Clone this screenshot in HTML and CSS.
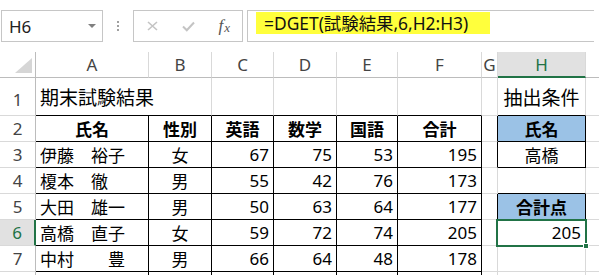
FILE: index.html
```html
<!DOCTYPE html>
<html lang="ja">
  <head>
    <meta charset="UTF-8" />
    <title>DGET</title>
    <link rel="stylesheet" href="styles.css">
  </head>
  <body>
    <div class="topbar">
      <div class="namebox"><span>H6</span><span class="caret"></span></div>
      <div class="dots"><span></span><span></span><span></span></div>
      <div class="fxbox">
        <span class="btn">
          <svg width="11" height="10" viewBox="0 0 11 10"><path d="M1 1 L10 9 M10 1 L1 9" stroke="#c4c4c4" stroke-width="1.6" fill="none"/></svg>
        </span>
        <span class="btn">
          <svg width="13" height="11" viewBox="0 0 13 11"><path d="M1 5.5 L4.8 9.3 L12 1.5" stroke="#c4c4c4" stroke-width="2" fill="none"/></svg>
        </span>
        <span class="btn fx"><i>f</i><i class="sub">x</i></span>
      </div>
      <div class="formula"><span class="hl">=DGET(試験結果,6,H2:H3)</span></div>
    </div>

    <div class="sheet">
      <!-- column headers -->
      <div class="c corner"><div class="tri"></div></div>
      <div class="c ch">A</div>
      <div class="c ch">B</div>
      <div class="c ch">C</div>
      <div class="c ch">D</div>
      <div class="c ch">E</div>
      <div class="c ch">F</div>
      <div class="c ch">G</div>
      <div class="c ch sel">H</div>
      <div class="c ch"></div>

      <!-- row 1 -->
      <div class="c rh r1">1</div>
      <div class="c title bb span2">期末試験結果</div>
      <div class="c bb"></div>
      <div class="c bb"></div>
      <div class="c bb"></div>
      <div class="c bb"></div>
      <div class="c"></div>
      <div class="c ctr title2 bb">抽出条件</div>
      <div class="c"></div>

      <!-- row 2 -->
      <div class="c rh">2</div>
      <div class="c ctr b br bb">氏名</div>
      <div class="c ctr b br bb">性別</div>
      <div class="c ctr b br bb">英語</div>
      <div class="c ctr b br bb">数学</div>
      <div class="c ctr b br bb">国語</div>
      <div class="c ctr b br bb">合計</div>
      <div class="c br"></div>
      <div class="c ctr b blue br bb">氏名</div>
      <div class="c"></div>

      <!-- row 3 -->
      <div class="c rh">3</div>
      <div class="c br bb">伊藤　裕子</div>
      <div class="c ctr br bb">女</div>
      <div class="c num br bb">67</div>
      <div class="c num br bb">75</div>
      <div class="c num br bb">53</div>
      <div class="c num br bb">195</div>
      <div class="c br"></div>
      <div class="c ctr br bb">高橋</div>
      <div class="c"></div>

      <!-- row 4 -->
      <div class="c rh">4</div>
      <div class="c br bb">榎本　徹</div>
      <div class="c ctr br bb">男</div>
      <div class="c num br bb">55</div>
      <div class="c num br bb">42</div>
      <div class="c num br bb">76</div>
      <div class="c num br bb">173</div>
      <div class="c"></div>
      <div class="c bb"></div>
      <div class="c"></div>

      <!-- row 5 -->
      <div class="c rh">5</div>
      <div class="c br bb">大田　雄一</div>
      <div class="c ctr br bb">男</div>
      <div class="c num br bb">50</div>
      <div class="c num br bb">63</div>
      <div class="c num br bb">64</div>
      <div class="c num br bb">177</div>
      <div class="c br"></div>
      <div class="c ctr b blue br bb">合計点</div>
      <div class="c"></div>

      <!-- row 6 -->
      <div class="c rh sel">6</div>
      <div class="c br bb">高橋　直子</div>
      <div class="c ctr br bb">女</div>
      <div class="c num br bb">59</div>
      <div class="c num br bb">72</div>
      <div class="c num br bb">74</div>
      <div class="c num br bb">205</div>
      <div class="c br"></div>
      <div class="c num br bb active">205</div>
      <div class="c"></div>

      <!-- row 7 -->
      <div class="c rh">7</div>
      <div class="c br bb">中村　　豊</div>
      <div class="c ctr br bb">男</div>
      <div class="c num br bb">66</div>
      <div class="c num br bb">64</div>
      <div class="c num br bb">48</div>
      <div class="c num br bb">178</div>
      <div class="c"></div>
      <div class="c"></div>
      <div class="c"></div>

      <!-- row 8 (only its top edge is in view) -->
      <div class="c rh"></div>
      <div class="c br bb"></div>
      <div class="c br bb"></div>
      <div class="c br bb"></div>
      <div class="c br bb"></div>
      <div class="c br bb"></div>
      <div class="c br bb"></div>
      <div class="c"></div>
      <div class="c"></div>
      <div class="c"></div>
    </div>
  </body>
</html>
```

FILE: styles.css
```css
body {
  margin: 0;
  background: #fff;
  font-family: "Noto Sans", "Noto Sans CJK JP", sans-serif;
  color: #000;
  overflow: hidden;
}

/* formula bar */
.topbar {
  display: flex;
  align-items: flex-start;
  height: 50px;
  padding-top: 10px;
  box-sizing: border-box;
}
.namebox {
  margin-left: 1px;
  width: 102px;
  height: 32px;
  box-sizing: border-box;
  border: 1px solid #c6c6c6;
  display: flex;
  align-items: center;
  justify-content: space-between;
  padding: 0 6px 0 7px;
  font-size: 17px;
  color: #222;
}
.caret {
  width: 0;
  height: 0;
  border-left: 4px solid transparent;
  border-right: 4px solid transparent;
  border-top: 4px solid #808080;
}
.dots {
  width: 30px;
  height: 32px;
  display: flex;
  flex-direction: column;
  align-items: center;
  justify-content: center;
  gap: 2px;
}
.dots span {
  width: 2px;
  height: 2px;
  background: #a0a0a0;
}
.fxbox {
  width: 110px;
  height: 32px;
  box-sizing: border-box;
  border: 1px solid #c6c6c6;
  display: flex;
  align-items: center;
  padding-left: 1px;
}
.btn {
  width: 36px;
  display: flex;
  justify-content: center;
  align-items: center;
}
.fx {
  font-family: "Liberation Serif", serif;
  font-size: 17px;
  color: #555;
}
.fx .sub {
  font-size: 13px;
  margin-left: 1px;
  position: relative;
  top: 2px;
}
.formula {
  margin-left: 4px;
  width: 347px;
  height: 32px;
  box-sizing: border-box;
  border: 1px solid #c6c6c6;
  border-right: none;
  padding: 1px 0 0 8px;
}
.hl {
  display: inline-block;
  background: #ffff3c;
  height: 22px;
  line-height: 22px;
  padding: 0 22px 0 8px;
  font-size: 17.4px;
  color: #111;
}

/* sheet grid */
.sheet {
  margin-top: 2px;
  display: grid;
  grid-template-columns: 36px 113px 63px 62px 63px 61px 84px 16px 88px 100px;
  grid-template-rows: 26px 38px repeat(7, 26px);
}
.c {
  box-sizing: border-box;
  border-right: 1px solid #d9d9d9;
  border-bottom: 1px solid #d9d9d9;
  display: flex;
  align-items: center;
  padding: 0 4px;
  font-size: 17px;
  white-space: nowrap;
  overflow: hidden;
}
.corner {
  border-right-color: #bcbcbc;
  border-bottom-color: #bcbcbc;
  justify-content: flex-end;
  align-items: flex-end;
  padding: 0 3px 4px 0;
}
.tri {
  width: 17px;
  height: 15px;
  background: #d6d6d6;
  clip-path: polygon(100% 0, 100% 100%, 0 100%);
}
.ch {
  justify-content: center;
  color: #444;
  border-bottom-color: #bcbcbc;
}
.ch.sel {
  background: #e1e1e1;
  color: #217346;
  border-bottom: 2px solid #217346;
}
.rh {
  justify-content: center;
  color: #444;
  border-right-color: #bcbcbc;
}
.rh.sel {
  background: #e1e1e1;
  color: #217346;
  border-right: 2px solid #217346;
}
.r1 {
  align-items: flex-end;
  padding-bottom: 4px;
}
.span2 {
  grid-column: span 2;
}
.title,
.title2 {
  font-size: 19px;
}
.ctr {
  justify-content: center;
}
.num {
  justify-content: flex-end;
}
.b {
  font-weight: bold;
}
.blue {
  background: #9bc2e6;
}
.br {
  border-right-color: #000;
}
.bb {
  border-bottom-color: #000;
}

/* selected cell */
.active {
  position: relative;
  overflow: visible;
}
.active::after {
  content: "";
  position: absolute;
  left: -2px;
  top: -1px;
  right: -2px;
  bottom: -2px;
  border: 2px solid #217346;
}
.active::before {
  content: "";
  position: absolute;
  left: 85px;
  top: 23px;
  width: 6px;
  height: 6px;
  background: #217346;
  border: 1px solid #fff;
  box-sizing: border-box;
  z-index: 1;
}
```
